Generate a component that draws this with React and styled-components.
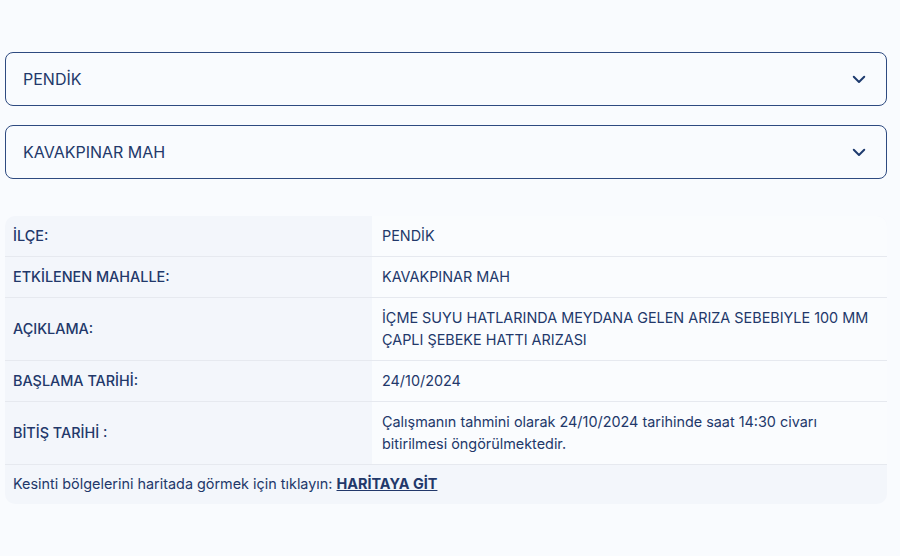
import React from 'react';
import styled, { createGlobalStyle } from 'styled-components';

const GlobalStyle = createGlobalStyle`
  body {
    margin: 0;
    background: #f9fbfe;
    font-family: Inter, "Noto Sans", sans-serif;
    color: #22386a;
  }
`;

const rows = [
  { label: 'İLÇE:', value: 'PENDİK' },
  { label: 'ETKİLENEN MAHALLE:', value: 'KAVAKPINAR MAH' },
  {
    label: 'AÇIKLAMA:',
    value: 'İÇME SUYU HATLARINDA MEYDANA GELEN ARIZA SEBEBIYLE 100 MM ÇAPLI ŞEBEKE HATTI ARIZASI',
  },
  { label: 'BAŞLAMA TARİHİ:', value: '24/10/2024' },
  {
    label: 'BİTİŞ TARİHİ :',
    value: 'Çalışmanın tahmini olarak 24/10/2024 tarihinde saat 14:30 civarı bitirilmesi öngörülmektedir.',
  },
];

const ChevronDown = () => (
  <svg width="18" height="18" viewBox="0 0 24 24" fill="none" stroke="currentColor" strokeWidth="2.6" strokeLinecap="round" strokeLinejoin="round">
    <path d="M5 9l7 7 7-7" />
  </svg>
);

const App = () => {
  return (
    <Page>
      <GlobalStyle />
      <Select>
        <span>PENDİK</span>
        <ChevronDown />
      </Select>
      <Select>
        <span>KAVAKPINAR MAH</span>
        <ChevronDown />
      </Select>
      <Table>
        {rows.map(row => (
          <React.Fragment key={row.label}>
            <Label>{row.label}</Label>
            <Value>{row.value}</Value>
          </React.Fragment>
        ))}
        <Footer>
          Kesinti bölgelerini haritada görmek için tıklayın: <MapLink href="#">HARİTAYA GİT</MapLink>
        </Footer>
      </Table>
    </Page>
  );
};

export default App;

const Page = styled.div`
  padding: 52px 13px 0 5px;
  display: flex;
  flex-direction: column;
`;

const Select = styled.div`
  height: 54px;
  box-sizing: border-box;
  border: 1px solid #2e4a80;
  border-radius: 8px;
  display: flex;
  align-items: center;
  justify-content: space-between;
  padding: 0 18px 0 17px;
  margin-bottom: 19px;
  font-size: 16px;
  color: #22386a;
  svg {
    color: #1e3a6e;
  }
`;

const Table = styled.div`
  margin-top: 18px;
  display: grid;
  grid-template-columns: 367px 1fr;
  background: #f3f6fb;
  border-radius: 10px;
  overflow: hidden;
  font-size: 14.4px;
  line-height: 22px;
`;

const Label = styled.div`
  display: flex;
  align-items: center;
  padding: 9px 8px;
  font-weight: 500;
  border-bottom: 1px solid #e6e9ef;
`;

const Value = styled.div`
  background: #fafcfe;
  padding: 9px 18px 9px 10px;
  border-bottom: 1px solid #e6e9ef;
`;

const Footer = styled.div`
  grid-column: 1 / -1;
  padding: 8px 8px 9px;
`;

const MapLink = styled.a`
  color: #22386a;
  font-weight: 700;
  text-decoration: underline;
`;
